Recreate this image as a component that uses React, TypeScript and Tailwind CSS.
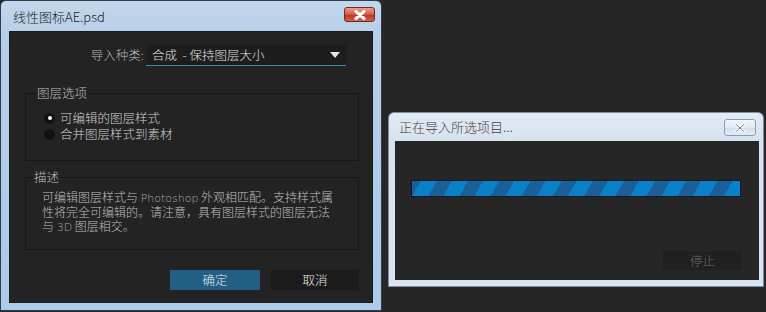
import React from 'react';

const cjk = { fontFamily: '"Noto Sans CJK SC", "Liberation Sans", sans-serif' };
const latin = { fontFamily: '"DejaVu Sans", sans-serif' };

const CloseButton = ({ active }: { active: boolean }) => (
  <div
    className={`flex items-center justify-center rounded-[3px] border ${
      active
        ? 'w-[31px] h-[15px] border-[#6b2a22] bg-[linear-gradient(#e8a08f,#cf5a45_50%,#b8321f_51%,#d0654c)]'
        : 'w-[32px] h-[17px] border-[#8a9bb0] bg-[linear-gradient(#f2f6fb,#dfe8f3_50%,#d2deec_51%,#e3ebf5)]'
    }`}
  >
    <svg width="12" height="10" viewBox="0 0 12 10">
      <path d="M2 1.5 L10 8.5 M10 1.5 L2 8.5" stroke="#ffffff" strokeWidth="3" strokeLinecap="round" />
      <path
        d="M2 1.5 L10 8.5 M10 1.5 L2 8.5"
        stroke={active ? '#ffffff' : '#6e7c8e'}
        strokeWidth={active ? 2.4 : 1}
        strokeLinecap="round"
        fill="none"
      />
    </svg>
  </div>
);

const Radio = ({ checked, label }: { checked: boolean; label: string }) => (
  <div className="flex items-center gap-[5px] h-[16px]">
    <span className="w-[11px] h-[11px] rounded-full bg-[#121212] flex items-center justify-center">
      {checked && <span className="w-[4px] h-[4px] rounded-full bg-white" />}
    </span>
    <span className="text-[12.5px] leading-[16px] font-light text-[#cfcfcf]">{label}</span>
  </div>
);

const ImportDialog = () => (
  <div
    className="absolute left-0 top-0 w-[382px] h-[311px] rounded-t-[6px] border border-[#2f3c4b] bg-[linear-gradient(#c3d7ec,#b4cde8_40px,#aecbea)] flex flex-col px-[8px] pb-[7px]"
    style={cjk}
  >
    <div className="h-[30px] flex items-center justify-between pl-[4px]">
      <span className="text-[13px] font-light text-[#1c1c1c] pt-[2px]">线性图标AE.psd</span>
      <div className="mt-[-3px] mr-[-2px]">
        <CloseButton active />
      </div>
    </div>
    <div className="flex-1 bg-[#232323] border border-[#1a1a1a] flex flex-col pl-[15px] pr-[13px]">
      <div className="flex items-center mt-[13px] h-[21px]">
        <span className="w-[119px] text-right text-[12.5px] font-light text-[#b4b4b4]">导入种类:</span>
        <div className="ml-[2px] w-[200px] h-[21px] bg-[#1d1d1d] border-b border-[#3d8bb0] flex items-center justify-between pl-[6px] pr-[6px]">
          <span className="text-[12.5px] font-light text-[#e0e0e0]">合成&nbsp;&nbsp;-&nbsp;保持图层大小</span>
          <svg width="10" height="6" viewBox="0 0 10 6">
            <path d="M0 0 L10 0 L5 6 Z" fill="#e6e6e6" />
          </svg>
        </div>
      </div>

      <fieldset className="mt-[20px] h-[75px] border border-[#171717] px-[18px] pt-[10px]">
        <legend className="px-[1px] ml-[-8px] text-[12.5px] font-light text-[#bdbdbd] leading-[14px]">图层选项</legend>
        <Radio checked label="可编辑的图层样式" />
        <Radio checked={false} label="合并图层样式到素材" />
      </fieldset>

      <fieldset className="mt-[9px] h-[80px] border border-[#171717] px-[16px] pt-[6px]">
        <legend className="px-[1px] ml-[-9px] text-[12.5px] font-light text-[#bdbdbd] leading-[14px]">描述</legend>
        <div className="text-[12px] leading-[14.5px] font-light text-[#bfbfbf]">
          <div>
            可编辑图层样式与 <span className="text-[11px] leading-none text-[#a8a8a8]" style={latin}>Photoshop</span> 外观相匹配。支持样式属
          </div>
          <div>性将完全可编辑的。请注意，具有图层样式的图层无法</div>
          <div>
            与 <span className="text-[11px] leading-none text-[#a8a8a8]" style={latin}>3D</span> 图层相交。
          </div>
        </div>
      </fieldset>

      <div className="flex justify-end gap-[11px] mt-[20px]">
        <button className="w-[90px] h-[20px] bg-[#235f84] text-[12.5px] font-light text-[#e8e8e8] leading-[20px]">确定</button>
        <button className="w-[88px] h-[20px] bg-[#1b1b1b] text-[12.5px] font-light text-[#e8e8e8] leading-[20px]">取消</button>
      </div>
    </div>
  </div>
);

const ProgressDialog = () => (
  <div
    className="absolute left-[388px] top-[112px] w-[376px] h-[175px] rounded-t-[6px] border border-[#7f8fa3] bg-[linear-gradient(#e3ebf4,#d6e2ef_30px,#d9e5f2)] flex flex-col pl-[6px] pr-[4px] pb-[6px]"
    style={cjk}
  >
    <div className="h-[28px] flex items-center justify-between pl-[4px]">
      <span className="text-[13px] font-light text-[#3f3f3f]">正在导入所选项目...</span>
      <div className="mr-[3px] mt-[1px]">
        <CloseButton active={false} />
      </div>
    </div>
    <div className="flex-1 bg-[#262626] flex flex-col pl-[16px]">
      <div className="mt-[39px] w-[330px] h-[17px] border border-[#0c1a30] bg-[repeating-linear-gradient(-60deg,#0a80c8_0px,#0a80c8_14px,#1a5f97_14px,#1a5f97_27px)]" />
      <div className="flex mt-[54px] pl-[252px]">
        <button className="w-[79px] h-[19px] bg-[#202020] text-[12.5px] font-light text-[#6e6e6e] leading-[19px]">停止</button>
      </div>
    </div>
  </div>
);

export default function App() {
  return (
    <div className="relative w-[766px] h-[312px] overflow-hidden bg-[#262626]">
      <ImportDialog />
      <ProgressDialog />
    </div>
  );
}
